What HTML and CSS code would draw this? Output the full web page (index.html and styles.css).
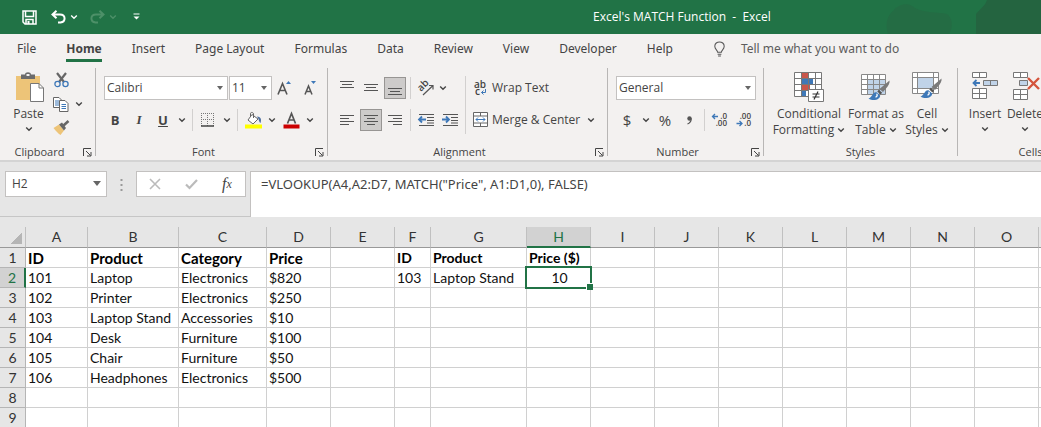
FILE: index.html
```html
<!DOCTYPE html>
<html lang="en">
<head>
    <meta charset="UTF-8">
    <meta name="viewport" content="width=device-width, initial-scale=1.0">
    <title>Excel's MATCH Function - Excel</title>
    <link rel="stylesheet" href="styles.css">
</head>
<body>
    <!-- Shared icons -->
    <svg class="icon-defs" aria-hidden="true">
        <symbol id="chevron" viewBox="0 0 8 8">
            <path d="M1.2 2.5 L4 5.2 L6.8 2.5" fill="none" stroke="currentColor" stroke-width="1.4"/>
        </symbol>
        <symbol id="launcher" viewBox="0 0 9 9">
            <path d="M0.5 8 V0.5 H8 M3 3 L7.5 7.5 M8 4 V8 H4" fill="none" stroke="currentColor"/>
        </symbol>
        <symbol id="brush" viewBox="0 0 22 22">
            <path d="M21.500 0.500 C22 3 20.500 6 17.500 9 L15 12 L11.500 9 Z" fill="#7a7a7a"/>
            <path d="M10.800 9.800 L14.200 12.800 L12.500 14.500 L9.300 11.600 Z" fill="#555"/>
            <path d="M8.500 12.200 C4.500 11.500 4.500 17 0.500 18.500 C5 21.500 12 20 12.200 15.500 Z" fill="#3e78b8"/>
            <path d="M8.500 14 C9.500 14.500 9.500 16.500 7.500 17.200" fill="none" stroke="#fff" stroke-width="1.400"/>
        </symbol>
    </svg>

    <header class="title-bar">
        <div class="quick-access">
            <button class="qa-btn" aria-label="Save">
                <svg width="15" height="15" viewBox="0 0 15 15"><path d="M1 1 H14 V14 H3 L1 12 Z M3.500 1 V6.500 H11.500 V1 M4 14 V9.500 H11 V14" fill="none" stroke="#fff" stroke-width="1.500"/><path d="M5.500 11 H7.500 V14 H5.500 Z" fill="#fff"/></svg>
            </button>
            <button class="qa-btn" aria-label="Undo">
                <svg width="15" height="14" viewBox="0 0 15 14"><path d="M1.500 4.500 H9 C15 4.500 15 12 9.500 12.500 L7 12.500 M5.500 0.800 L1.500 4.500 L5.500 8.300" fill="none" stroke="#fff" stroke-width="2"/></svg>
            </button>
            <button class="chev-btn" aria-label="Undo history"><svg width="8" height="8"><use href="#chevron"/></svg></button>
            <button class="qa-btn dim" aria-label="Redo">
                <svg width="15" height="14" viewBox="0 0 15 14"><path d="M13.500 4.500 H6 C0 4.500 0 12 5.500 12.500 L8 12.500 M9.500 0.800 L13.500 4.500 L9.500 8.300" fill="none" stroke="currentColor" stroke-width="2"/></svg>
            </button>
            <button class="chev-btn dim" aria-label="Redo history"><svg width="8" height="8"><use href="#chevron"/></svg></button>
            <button class="qa-btn" aria-label="Customize toolbar">
                <svg width="7" height="8" viewBox="0 0 7 8"><path d="M0.500 1 H6.500" stroke="#fff"/><path d="M0.500 3.500 H6.500 L3.500 6.500 Z" fill="#fff"/></svg>
            </button>
        </div>
        <h1 class="doc-title">Excel's MATCH Function&nbsp; -&nbsp; Excel</h1>
        <svg class="clouds" viewBox="0 0 160 34" aria-hidden="true">
            <path d="M7 34 C4 24 6 16 12 11 C18 3 28 2 34 8 C42 13 58 12 66 14 C72 18 72 28 68 34 Z" fill="#246c44"/>
            <path d="M95 34 V14 C100 8 104 6 106 0 H160 V34 Z" fill="#246440"/>
        </svg>
    </header>

    <nav class="tabs">
        <a class="tab" href="#">File</a>
        <a class="tab active" href="#">Home</a>
        <a class="tab" href="#">Insert</a>
        <a class="tab" href="#">Page Layout</a>
        <a class="tab" href="#">Formulas</a>
        <a class="tab" href="#">Data</a>
        <a class="tab" href="#">Review</a>
        <a class="tab" href="#">View</a>
        <a class="tab" href="#">Developer</a>
        <a class="tab" href="#">Help</a>
        <a class="tab tell-me" href="#">
            <svg width="13" height="16" viewBox="0 0 13 17"><path d="M4.500 12 C4.500 9.500 1.500 9 1.500 5.500 C1.500 -0.500 11.500 -0.500 11.500 5.500 C11.500 9 8.500 9.500 8.500 12 Z M4.500 14 H8.500 M5 16 H8" fill="none" stroke="#555" stroke-width="1.100"/></svg>
            Tell me what you want to do
        </a>
    </nav>

    <section class="ribbon">
        <div class="group clipboard">
            <div class="group-body">
                <button class="big-btn paste">
                    <svg width="30" height="30" viewBox="0 0 30 30"><path d="M2 4 H26 V28 H2 Z" fill="#edc478"/><path d="M7 2.500 H11 C11 -0.500 17 -0.500 17 2.500 H21 V7 H7 Z" fill="#6b6b6b"/><path d="M12.500 2 H15.500 V4 H12.500 Z" fill="#f3f1f0"/><path d="M16.500 11.500 H25 L29.500 16 V29.500 H16.500 Z" fill="#fff" stroke="#777"/><path d="M25 11.500 V16 H29.500" fill="none" stroke="#777"/></svg>
                    <span>Paste</span>
                    <svg width="8" height="8"><use href="#chevron"/></svg>
                </button>
                <div class="clip-tools">
                    <button class="btn" aria-label="Cut">
                        <svg width="15" height="16" viewBox="0 0 15 16"><path d="M3 1 L10 10 M12 1 L5 10" stroke="#666" stroke-width="2.200"/><circle cx="3.500" cy="12" r="2.600" fill="#f3f1f0" stroke="#3e78b8" stroke-width="1.300"/><circle cx="11.500" cy="12" r="2.600" fill="#f3f1f0" stroke="#3e78b8" stroke-width="1.300"/></svg>
                    </button>
                    <div class="tool-pair">
                        <button class="btn" aria-label="Copy">
                            <svg width="16" height="15" viewBox="0 0 16 15"><path d="M0.500 0.500 H6 L8.500 3 V10.500 H0.500 Z" fill="#fff" stroke="#666"/><path d="M2 4 H6 M2 6 H6 M2 8 H6" stroke="#3e78b8"/><path d="M6.500 3.500 H12 L15 6.500 V14.500 H6.500 Z" fill="#fff" stroke="#666"/><path d="M8.500 7.500 H13 M8.500 9.500 H13 M8.500 11.500 H13" stroke="#3e78b8"/></svg>
                        </button>
                        <button class="chev-btn" aria-label="Copy options"><svg width="8" height="8"><use href="#chevron"/></svg></button>
                    </div>
                    <button class="btn" aria-label="Format Painter">
                        <svg width="17" height="16" viewBox="0 0 17 16"><path d="M0.500 8 L6 4.500 L11 10.500 L7.500 15 C5 13.500 3 11 0.500 8 Z" fill="#edc478"/><path d="M6 4.500 L9 2.500 L13 8 L11 10.500 Z" fill="#666"/><path d="M10.500 5.500 L15.500 1" stroke="#666" stroke-width="2.600"/></svg>
                    </button>
                </div>
            </div>
            <footer class="group-label with-launcher">Clipboard<button class="launcher" aria-label="Clipboard settings"><svg width="9" height="9"><use href="#launcher"/></svg></button></footer>
        </div>

        <div class="group font">
            <div class="group-body rows">
                <div class="row fields">
                    <span class="select-wrap font-name"><select aria-label="Font"><option>Calibri</option></select></span>
                    <span class="select-wrap font-size"><select aria-label="Font size"><option>11</option></select></span>
                    <button class="btn" aria-label="Increase font size">
                        <svg width="16" height="16" viewBox="0 0 16 16"><path d="M1 14.500 L5.500 3.500 L10 14.500 M2.800 10.500 H8.200" fill="none" stroke="#555" stroke-width="1.600"/><path d="M9 4 L11.500 1 L14 4 Z" fill="#3e78b8"/></svg>
                    </button>
                    <button class="btn" aria-label="Decrease font size">
                        <svg width="16" height="16" viewBox="0 0 16 16"><path d="M3 14.500 L6.500 6 L10 14.500 M4.500 11.500 H8.500" fill="none" stroke="#555" stroke-width="1.500"/><path d="M9 1 H14 L11.500 4 Z" fill="#3e78b8"/></svg>
                    </button>
                </div>
                <div class="row">
                    <button class="btn bold">B</button>
                    <button class="btn italic">I</button>
                    <button class="btn underline">U</button>
                    <button class="chev-btn" aria-label="Underline options"><svg width="8" height="8"><use href="#chevron"/></svg></button>
                    <span class="sep"></span>
                    <button class="btn" aria-label="Borders">
                        <svg width="14" height="14" viewBox="0 0 14 14"><path d="M0 0.500 H13 M0 6.500 H13 M0.500 0 V13 M6.500 0 V13 M12.500 0 V13" stroke="#777" stroke-dasharray="1 1"/><path d="M0 13 H13" stroke="#444" stroke-width="1.500"/></svg>
                    </button>
                    <button class="chev-btn" aria-label="Border options"><svg width="8" height="8"><use href="#chevron"/></svg></button>
                    <span class="sep"></span>
                    <button class="btn" aria-label="Fill color">
                        <svg width="17" height="17" viewBox="0 0 17 17"><path d="M7 2.500 L13 7 L8 12 L3 8 Z" fill="#fff" stroke="#666"/><path d="M5.500 5 V1.500 C5.500 0 8.500 0 8.500 2 V6" fill="none" stroke="#666"/><path d="M12 4.500 C16.500 5 16.500 8 15.500 11 C14.500 10.500 14 9 13.500 7 Z" fill="#4d6f9e"/><rect x="0" y="12.500" width="17" height="4" fill="#ff0"/></svg>
                    </button>
                    <button class="chev-btn" aria-label="Fill options"><svg width="8" height="8"><use href="#chevron"/></svg></button>
                    <button class="btn" aria-label="Font color">
                        <svg width="17" height="17" viewBox="0 0 17 17"><path d="M4.500 11.500 L8.500 1.500 L12.500 11.500 M6 8 H11" fill="none" stroke="#555" stroke-width="1.700"/><rect x="0.500" y="12.500" width="16" height="4" fill="#c00"/></svg>
                    </button>
                    <button class="chev-btn" aria-label="Font color options"><svg width="8" height="8"><use href="#chevron"/></svg></button>
                </div>
            </div>
            <footer class="group-label with-launcher">Font<button class="launcher" aria-label="Font settings"><svg width="9" height="9"><use href="#launcher"/></svg></button></footer>
        </div>

        <div class="group alignment">
            <div class="group-body">
                <div class="rows">
                    <div class="row">
                        <button class="btn" aria-label="Top align"><svg width="14" height="14" viewBox="0 0 14 14"><path d="M0 0.500 H14 M2 3.500 H12 M0 6.500 H14" stroke="#555"/></svg></button>
                        <button class="btn" aria-label="Middle align"><svg width="14" height="14" viewBox="0 0 14 14"><path d="M0 3.500 H14 M2 6.500 H12 M0 9.500 H14" stroke="#555"/></svg></button>
                        <button class="btn pressed" aria-label="Bottom align"><svg width="14" height="14" viewBox="0 0 14 14"><path d="M0 7.500 H14 M2 10.500 H12 M0 13.500 H14" stroke="#555"/></svg></button>
                        <span class="sep"></span>
                        <button class="btn" aria-label="Orientation">
                            <svg width="17" height="16" viewBox="0 0 17 16"><text class="icon-text" x="0" y="9" font-size="10" transform="rotate(-45 5 7)">ab</text><path d="M5 15 L15 5.500 M11 5.500 H15 V9.500" fill="none" stroke="#555" stroke-width="1.200"/></svg>
                        </button>
                        <button class="chev-btn" aria-label="Orientation options"><svg width="8" height="8"><use href="#chevron"/></svg></button>
                    </div>
                    <div class="row">
                        <button class="btn" aria-label="Align left"><svg width="14" height="12" viewBox="0 0 14 12"><path d="M0 1.500 H14 M0 4.500 H9 M0 7.500 H14 M0 10.500 H9" stroke="#555"/></svg></button>
                        <button class="btn pressed" aria-label="Center"><svg width="14" height="12" viewBox="0 0 14 12"><path d="M0 1.500 H14 M3 4.500 H11 M0 7.500 H14 M3 10.500 H11" stroke="#555"/></svg></button>
                        <button class="btn" aria-label="Align right"><svg width="14" height="12" viewBox="0 0 14 12"><path d="M0 1.500 H14 M5 4.500 H14 M0 7.500 H14 M5 10.500 H14" stroke="#555"/></svg></button>
                        <span class="sep"></span>
                        <button class="btn" aria-label="Decrease indent"><svg width="17" height="14" viewBox="0 0 17 14"><path d="M1 1.500 H16 M9 4.500 H16 M9 7.500 H16 M1 12.500 H16 M9 10 H16" stroke="#555"/><path d="M1 6.500 H8 M4 3.500 L1 6.500 L4 9.500" fill="none" stroke="#3e78b8" stroke-width="1.800"/></svg></button>
                        <button class="btn" aria-label="Increase indent"><svg width="17" height="14" viewBox="0 0 17 14"><path d="M1 1.500 H16 M9 4.500 H16 M9 7.500 H16 M1 12.500 H16 M9 10 H16" stroke="#555"/><path d="M0 6.500 H7 M4 3.500 L7 6.500 L4 9.500" fill="none" stroke="#3e78b8" stroke-width="1.800"/></svg></button>
                    </div>
                </div>
                <span class="sep tall"></span>
                <div class="rows">
                    <button class="text-btn">
                        <svg width="16" height="16" viewBox="0 0 16 16"><text class="icon-text" x="1" y="8" font-size="10">ab</text><text class="icon-text" x="2" y="15" font-size="10">c</text><path d="M12.500 9 V12.500 H8.500 M10.500 10.500 L8.500 12.500 L10.500 14.500" fill="none" stroke="#3e78b8"/></svg>
                        Wrap Text
                    </button>
                    <div class="row">
                        <button class="text-btn">
                            <svg width="16" height="16" viewBox="0 0 16 16"><path d="M0.500 0.500 H14.500 V14.500 H0.500 Z M0.500 4 H14.500 M0.500 11 H14.500 M7.500 0.500 V4 M7.500 11 V14.500" fill="#fff" stroke="#666"/><path d="M3 7.500 H12 M5 5.500 L3 7.500 L5 9.500 M10 5.500 L12 7.500 L10 9.500" fill="none" stroke="#3e78b8"/></svg>
                            Merge &amp; Center
                        </button>
                        <button class="chev-btn" aria-label="Merge options"><svg width="8" height="8"><use href="#chevron"/></svg></button>
                    </div>
                </div>
            </div>
            <footer class="group-label with-launcher">Alignment<button class="launcher" aria-label="Alignment settings"><svg width="9" height="9"><use href="#launcher"/></svg></button></footer>
        </div>

        <div class="group number">
            <div class="group-body rows">
                <div class="row fields">
                    <span class="select-wrap number-format"><select aria-label="Number format"><option>General</option></select></span>
                </div>
                <div class="row">
                    <button class="btn symbol">$</button>
                    <button class="chev-btn" aria-label="Currency options"><svg width="8" height="8"><use href="#chevron"/></svg></button>
                    <button class="btn symbol">%</button>
                    <button class="btn" aria-label="Comma style"><svg width="7" height="9" viewBox="0 0 7 9"><circle cx="3.500" cy="2.500" r="2.200" fill="#555"/><path d="M5.200 2.500 C5.200 5 4 7 1.500 8" fill="none" stroke="#555" stroke-width="1.200"/></svg></button>
                    <span class="sep"></span>
                    <button class="btn" aria-label="Increase decimal"><svg width="16" height="14" viewBox="0 0 16 14"><path d="M0.500 3.500 H6 M3 1 L0.500 3.500 L3 6" fill="none" stroke="#3e78b8" stroke-width="1.300"/><text class="icon-text" x="15" y="6" text-anchor="end" font-size="8">.0</text><text class="icon-text" x="15" y="13" text-anchor="end" font-size="8">.00</text></svg></button>
                    <button class="btn" aria-label="Decrease decimal"><svg width="16" height="14" viewBox="0 0 16 14"><path d="M0.500 10.500 H6 M3.500 8 L6 10.500 L3.500 13" fill="none" stroke="#3e78b8" stroke-width="1.300"/><text class="icon-text" x="15" y="6" text-anchor="end" font-size="8">.00</text><text class="icon-text" x="15" y="13" text-anchor="end" font-size="8">.0</text></svg></button>
                </div>
            </div>
            <footer class="group-label with-launcher">Number<button class="launcher" aria-label="Number settings"><svg width="9" height="9"><use href="#launcher"/></svg></button></footer>
        </div>

        <div class="group styles">
            <div class="group-body">
                <button class="big-btn conditional">
                    <svg width="30" height="30" viewBox="0 0 30 30"><path d="M0.500 0.500 H27.500 V24.500 H0.500 Z" fill="#fff"/><path d="M8 1 H14 V6 H8 Z M8 13 H16 V18 H8 Z" fill="#c8564a"/><path d="M8 7 H19 V12 H8 Z M8 19 H12 V24 H8 Z" fill="#3e78b8"/><path d="M0.500 0.500 H27.500 V24.500 H0.500 Z M0.500 6.500 H27.500 M0.500 12.500 H27.500 M0.500 18.500 H27.500 M7.500 0.500 V24.500 M14.500 0.500 V24.500 M21.500 0.500 V24.500" fill="none" stroke="#777"/><path d="M14.500 17.500 H29.500 V29.500 H14.500 Z" fill="#fff" stroke="#777"/><path d="M18.500 22 H25.500 M18.500 25 H25.500 M24 19.500 L20 27.500" stroke="#333" stroke-width="1.200"/></svg>
                    <span>Conditional</span>
                    <span>Formatting <svg width="8" height="8"><use href="#chevron"/></svg></span>
                </button>
                <button class="big-btn format-table">
                    <svg width="30" height="30" viewBox="0 0 30 30"><path d="M0.500 2.500 H24.500 V22.500 H0.500 Z" fill="#fff"/><path d="M7 8 H24 V22 H7 Z" fill="#c0d3e8"/><path d="M0.500 2.500 H24.500 V22.500 H0.500 Z M0.500 7.500 H24.500 M0.500 12.500 H24.500 M0.500 17.500 H24.500 M6.500 2.500 V22.500 M12.500 2.500 V22.500 M18.500 2.500 V22.500" fill="none" stroke="#888"/><use href="#brush" x="7" y="8" width="22" height="22"/></svg>
                    <span>Format as</span>
                    <span>Table <svg width="8" height="8"><use href="#chevron"/></svg></span>
                </button>
                <button class="big-btn cell-styles">
                    <svg width="30" height="30" viewBox="0 0 30 30"><path d="M0.500 0.500 H26.500 V21.500 H0.500 Z M0.500 5.500 H26.500 M0.500 16.500 H26.500 M5.500 0.500 V21.500 M21.500 0.500 V21.500" fill="#fff" stroke="#888"/><path d="M6 6 H21 V16 H6 Z" fill="#c0d3e8"/><use href="#brush" x="8" y="6" width="22" height="22"/></svg>
                    <span>Cell</span>
                    <span>Styles <svg width="8" height="8"><use href="#chevron"/></svg></span>
                </button>
            </div>
            <footer class="group-label">Styles</footer>
        </div>

        <div class="group cells">
            <div class="group-body">
                <button class="big-btn">
                    <svg width="30" height="30" viewBox="0 0 30 30"><path d="M2.500 0.500 H16.500 V5.500 H2.500 Z M9.500 0.500 V5.500 M2.500 16.500 H16.500 V26.500 H2.500 Z M2.500 21.500 H16.500 M9.500 16.500 V26.500" fill="#fff" stroke="#777"/><path d="M13.500 8.500 H27.500 V13.500 H13.500 Z M20.500 8.500 V13.500" fill="#c0d3e8" stroke="#777"/><path d="M3.500 11 H10 M6.500 8 L3.500 11 L6.500 14" fill="none" stroke="#3e78b8" stroke-width="1.800"/></svg>
                    <span>Insert</span>
                    <svg width="8" height="8"><use href="#chevron"/></svg>
                </button>
                <button class="big-btn">
                    <svg width="30" height="30" viewBox="0 0 30 30"><path d="M3.500 0.500 H17.500 V5.500 H3.500 Z M10.500 0.500 V5.500 M3.500 17.500 H17.500 V27.500 H3.500 Z M3.500 22.500 H17.500 M10.500 17.500 V27.500" fill="#fff" stroke="#777"/><path d="M9.500 8.500 H17.500 V13.500 H9.500 Z" fill="#c0d3e8" stroke="#777"/><path d="M18 6 L29 17 M29 6 L18 17" stroke="#d4543c" stroke-width="2.400"/></svg>
                    <span>Delete</span>
                    <svg width="8" height="8"><use href="#chevron"/></svg>
                </button>
            </div>
            <footer class="group-label">Cells</footer>
        </div>
    </section>

    <section class="formula-bar">
        <span class="select-wrap name-box"><select aria-label="Name box"><option>H2</option></select></span>
        <svg class="grip" width="3" height="13" viewBox="0 0 3 13"><path d="M1.500 1 V13" stroke="#999" stroke-width="2" stroke-dasharray="2 3"/></svg>
        <div class="formula-actions">
            <button aria-label="Cancel"><svg width="12" height="12" viewBox="0 0 12 12"><path d="M1 1 L11 11 M11 1 L1 11" stroke="#bbb" stroke-width="1.600"/></svg></button>
            <button aria-label="Enter"><svg width="13" height="12" viewBox="0 0 13 12"><path d="M1 6.500 L4.500 10 L12 2" fill="none" stroke="#bbb" stroke-width="2.200"/></svg></button>
            <button class="fx"><i>f</i><sub>x</sub></button>
        </div>
        <textarea class="formula-input" aria-label="Formula" spellcheck="false">=VLOOKUP(A4,A2:D7, MATCH("Price", A1:D1,0), FALSE)</textarea>
    </section>

    <main class="sheet">
        <table class="grid">
            <colgroup>
                <col class="w-head"><col class="w-a"><col class="w-b"><col class="w-c"><col><col><col class="w-f"><col class="w-g"><col><col><col><col><col><col><col><col><col>
            </colgroup>
            <thead>
                <tr><th class="corner"></th><th>A</th><th>B</th><th>C</th><th>D</th><th>E</th><th>F</th><th>G</th><th class="selected">H</th><th>I</th><th>J</th><th>K</th><th>L</th><th>M</th><th>N</th><th>O</th><th></th></tr>
            </thead>
            <tbody>
                <tr class="heading"><th>1</th><td class="large">ID</td><td class="large">Product</td><td class="large">Category</td><td class="large">Price</td><td></td><td>ID</td><td>Product</td><td>Price ($)</td><td></td><td></td><td></td><td></td><td></td><td></td><td></td><td></td></tr>
                <tr><th class="selected">2</th><td>101</td><td>Laptop</td><td>Electronics</td><td>$820</td><td></td><td>103</td><td>Laptop Stand</td><td class="active-cell">10</td><td></td><td></td><td></td><td></td><td></td><td></td><td></td><td></td></tr>
                <tr><th>3</th><td>102</td><td>Printer</td><td>Electronics</td><td>$250</td><td></td><td></td><td></td><td></td><td></td><td></td><td></td><td></td><td></td><td></td><td></td><td></td></tr>
                <tr><th>4</th><td>103</td><td>Laptop Stand</td><td>Accessories</td><td>$10</td><td></td><td></td><td></td><td></td><td></td><td></td><td></td><td></td><td></td><td></td><td></td><td></td></tr>
                <tr><th>5</th><td>104</td><td>Desk</td><td>Furniture</td><td>$100</td><td></td><td></td><td></td><td></td><td></td><td></td><td></td><td></td><td></td><td></td><td></td><td></td></tr>
                <tr><th>6</th><td>105</td><td>Chair</td><td>Furniture</td><td>$50</td><td></td><td></td><td></td><td></td><td></td><td></td><td></td><td></td><td></td><td></td><td></td><td></td></tr>
                <tr><th>7</th><td>106</td><td>Headphones</td><td>Electronics</td><td>$500</td><td></td><td></td><td></td><td></td><td></td><td></td><td></td><td></td><td></td><td></td><td></td><td></td></tr>
                <tr><th>8</th><td></td><td></td><td></td><td></td><td></td><td></td><td></td><td></td><td></td><td></td><td></td><td></td><td></td><td></td><td></td><td></td></tr>
                <tr><th>9</th><td></td><td></td><td></td><td></td><td></td><td></td><td></td><td></td><td></td><td></td><td></td><td></td><td></td><td></td><td></td><td></td></tr>
            </tbody>
        </table>
    </main>
</body>
</html>
```
FILE: styles.css
```css
:root {
    --green: #217346;
    --ribbon-bg: #f3f1f0;
    --bar-bg: #e6e6e6;
    --text: #444;
    --line: #d0d0d0;
    --field-border: #c3c1c0;
}

* {
    margin: 0;
    padding: 0;
    box-sizing: border-box;
}

body {
    height: 100vh;
    display: flex;
    flex-direction: column;
    overflow: hidden;
    background: #fff;
    color: var(--text);
    font-family: "Open Sans", "Noto Sans", sans-serif;
    font-size: 12px;
    line-height: 16px;
}

button, select, textarea {
    font: inherit;
    color: inherit;
    border: none;
    background: none;
    outline: none;
}

svg {
    flex: none;
    overflow: visible;
}

.icon-defs {
    position: absolute;
    width: 0;
    height: 0;
}

/* Title bar */
.title-bar {
    position: relative;
    flex: none;
    display: flex;
    align-items: center;
    height: 34px;
    background: var(--green);
    color: #fff;
}

.quick-access {
    flex: none;
    display: flex;
    align-items: center;
    width: 323px;
    padding-left: 17px;
}

.qa-btn, .chev-btn {
    display: flex;
    align-items: center;
    justify-content: center;
    height: 24px;
}

.qa-btn {
    width: 24px;
    margin-right: 5px;
}

.chev-btn {
    width: 14px;
}

.qa-btn + .chev-btn {
    margin: 0 4px 0 -8px;
}

.dim {
    color: #4d9068;
}

.doc-title {
    position: relative;
    z-index: 1;
    flex: 1;
    font-size: 12px;
    font-weight: 400;
    text-align: center;
}

.clouds {
    position: absolute;
    top: 0;
    right: 0;
    width: 160px;
    height: 34px;
}

/* Tabs */
.tabs {
    flex: none;
    display: flex;
    align-items: flex-start;
    gap: 30px;
    height: 32px;
    padding-left: 17px;
    background: var(--ribbon-bg);
    font-family: "Noto Sans", sans-serif;
    white-space: nowrap;
}

.tab {
    padding: 7px 0 2px;
    border-bottom: 3px solid transparent;
    color: var(--text);
    text-decoration: none;
}

.tab.active {
    font-weight: 700;
    border-bottom-color: var(--green);
}

.tell-me {
    display: flex;
    align-items: center;
    gap: 15px;
    margin-left: 10px;
    color: #5c5c5c;
}

/* Ribbon */
.ribbon {
    flex: none;
    display: flex;
    height: 94px;
    background: var(--ribbon-bg);
    overflow: hidden;
}

.group {
    flex: none;
    display: flex;
    flex-direction: column;
    margin: 2px 0 4px;
    border-right: 1px solid #b8b6b5;
}

.clipboard {
    width: 96px;
}

.font {
    width: 232px;
}

.alignment {
    width: 280px;
}

.number {
    width: 156px;
}

.styles {
    width: 194px;
}

.cells {
    width: 146px;
}

.group-body {
    flex: 1;
    display: flex;
    padding: 8px 0 0 7px;
}

.group-body.rows, .rows {
    display: flex;
    flex-direction: column;
    gap: 8px;
}

.row {
    display: flex;
    align-items: center;
    height: 24px;
}

.fields {
    gap: 1px;
    padding-left: 1px;
}

.group-label {
    position: relative;
    height: 16px;
    line-height: 24px;
    text-align: center;
    font-size: 11px;
}

.with-launcher {
    padding-right: 16px;
}

.launcher {
    position: absolute;
    top: 8px;
    right: 3px;
    display: flex;
}

.btn {
    flex: none;
    display: flex;
    align-items: center;
    justify-content: center;
    width: 22px;
    height: 22px;
    margin: 0 1px;
}

.pressed {
    background: #cdcbca;
    border: 1px solid #979593;
}

.bold, .italic, .underline {
    font-size: 13px;
    font-weight: 700;
}

.italic {
    font-family: "Liberation Serif", serif;
    font-style: italic;
}

.underline {
    text-decoration: underline;
}

.sep {
    flex: none;
    width: 1px;
    height: 22px;
    margin: 0 3px;
    background: #d2d0cf;
}

.sep.tall {
    height: 58px;
    margin: 0 7px 0 17px;
}

.alignment .group-body .rows:first-child {
    width: 113px;
}

.text-btn {
    display: flex;
    align-items: center;
    gap: 3px;
    height: 24px;
    white-space: nowrap;
}

.text-btn + .chev-btn {
    margin-left: 4px;
}

.symbol {
    font-size: 15px;
}

.icon-text {
    font-family: "Open Sans", sans-serif;
    font-weight: 600;
    fill: #444;
}

/* Drop-downs */
.select-wrap {
    position: relative;
    display: flex;
    height: 24px;
    background: #fff;
    border: 1px solid var(--field-border);
}

.select-wrap::after {
    content: "";
    position: absolute;
    top: 9px;
    right: 4px;
    border: 3px solid transparent;
    border-top: 4px solid #666;
    border-bottom: none;
    pointer-events: none;
}

.select-wrap select {
    width: 100%;
    padding-left: 2px;
    appearance: none;
}

.font-name {
    width: 124px;
}

.font-size {
    width: 43px;
}

.number-format {
    width: 140px;
}

/* Large buttons */
.big-btn {
    display: flex;
    flex-direction: column;
    align-items: center;
    height: 66px;
    width: 40px;
    margin-top: -4px;
    white-space: nowrap;
}

.big-btn > svg:first-child {
    margin-bottom: 4px;
}

.big-btn > svg:last-child {
    margin-top: 3px;
}

.paste {
    width: 43px;
}

.clip-tools {
    display: flex;
    flex-direction: column;
    margin-top: -8px;
}

.clip-tools .btn {
    height: 24px;
    margin: 0;
}

.clip-tools .chev-btn {
    margin: 0;
}

.tool-pair {
    display: flex;
}

.conditional {
    width: 76px;
}

.format-table {
    width: 58px;
}

.cell-styles {
    width: 44px;
}

/* Formula bar */
.formula-bar {
    flex: none;
    display: flex;
    align-items: flex-start;
    height: 57px;
    padding: 9px 0 0 5px;
    background: var(--bar-bg);
    border-top: 2px solid #d4d4d4;
    border-bottom: 1px solid #c6c6c6;
}

.name-box {
    width: 102px;
    height: 26px;
}

.name-box select {
    padding-left: 6px;
}

.name-box::after {
    border-width: 4px;
    border-top-width: 5px;
    right: 5px;
}

.grip {
    margin: 7px 13px 0;
}

.formula-actions {
    display: flex;
    width: 110px;
    height: 26px;
    background: #fff;
    border: 1px solid var(--field-border);
}

.formula-actions button {
    flex: 1;
    display: flex;
    align-items: center;
    justify-content: center;
}

.fx {
    font-family: "Liberation Serif", serif;
    font-size: 16px;
    font-style: italic;
}

.fx sub {
    font-size: 12px;
}

.formula-input {
    flex: 1;
    height: 46px;
    margin-left: 4px;
    padding: 4px 10px;
    background: #fff;
    border: 1px solid var(--field-border);
    border-right: none;
    border-bottom: none;
    font-family: "Noto Sans", sans-serif;
    font-size: 13px;
    resize: none;
    overflow: hidden;
}

/* Sheet */
.sheet {
    flex: 1;
    overflow: hidden;
    padding-top: 10px;
    background: linear-gradient(var(--bar-bg) 30px, #fff 30px);
}

.grid {
    width: 1103px;
    table-layout: fixed;
    border-collapse: separate;
    border-spacing: 0;
    font-family: Lato, sans-serif;
    font-size: 14px;
    line-height: 18px;
    color: #111;
}

.grid col {
    width: 64px;
}

.grid .w-head {
    width: 26px;
}

.grid .w-a {
    width: 62px;
}

.grid .w-b {
    width: 91px;
}

.grid .w-c {
    width: 88px;
}

.grid .w-f {
    width: 36px;
}

.grid .w-g {
    width: 96px;
}

.grid th {
    height: 20px;
    background: var(--bar-bg);
    border-right: 1px solid #b5b5b5;
    border-bottom: 1px solid #b5b5b5;
    font-weight: 400;
    color: #333;
}

.grid thead th {
    height: 21px;
    border-right-color: #c0c0c0;
    border-bottom-color: #999;
}

.grid thead .corner {
    background: linear-gradient(135deg, var(--bar-bg) 50%, #b5b5b5 50%) no-repeat right 3px bottom 3px / 12px 12px;
}

.grid td {
    height: 20px;
    padding: 0 0 0 2px;
    border-right: 1px solid var(--line);
    border-bottom: 1px solid var(--line);
    white-space: nowrap;
}

.grid .heading td {
    font-weight: 700;
    color: #000;
}

.grid .heading .large {
    font-size: 15px;
}

.grid .selected {
    background: #d2d2d2;
    color: var(--green);
}

.grid thead .selected {
    border-bottom: 2px solid var(--green);
}

.grid tbody .selected {
    border-right: 2px solid var(--green);
}

.grid .active-cell {
    position: relative;
    text-align: center;
}

.active-cell::before {
    content: "";
    position: absolute;
    inset: -2px;
    border: 2px solid var(--green);
}

.active-cell::after {
    content: "";
    position: absolute;
    right: -3px;
    bottom: -3px;
    width: 6px;
    height: 6px;
    background: var(--green);
    border: 1px solid #fff;
    border-width: 1px 0 0 1px;
}
```
